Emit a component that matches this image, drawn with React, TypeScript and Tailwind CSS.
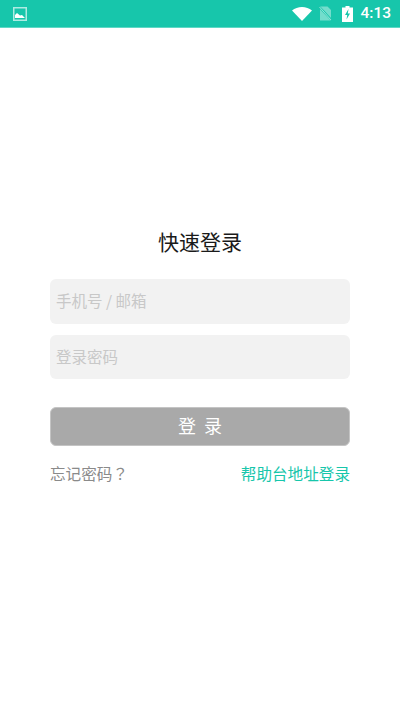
const cjk = "font-['Noto_Sans_CJK_SC',sans-serif]";

function StatusBar() {
  return (
    <div className="flex h-[28px] items-center justify-between border-b border-[#5fd8c5] bg-[#17c6ab] pl-[13px] pr-[9px]">
      <svg width="14" height="14" viewBox="0 0 14 14">
        <rect x="0.75" y="0.75" width="12.5" height="12.5" fill="none" stroke="#fff" strokeOpacity="0.65" strokeWidth="1.5" />
        <path d="M2 11V8l2-2 3 2.5 2-0.5 3 3z" fill="#fff" />
      </svg>
      <div className="flex items-center">
        <svg width="20" height="14" viewBox="0 0 20 14" className="mr-[7px]">
          <path d="M0 3.5C2.8 1.2 6.2 0 10 0s7.2 1.2 10 3.5L10 14z" fill="#fff" />
        </svg>
        <svg width="13" height="15" viewBox="0 0 13 15" className="mr-[10px]">
          <path d="M1 0.5h7.5l3.5 3.5v10.5H1z" fill="#fff" fillOpacity="0.4" />
          <path d="M0 0.5l13 14" stroke="#17c6ab" strokeWidth="2" />
          <path d="M0.5 1l11.5 13" stroke="#fff" strokeOpacity="0.55" strokeWidth="1" />
        </svg>
        <svg width="11" height="16" viewBox="0 0 11 16" className="mr-[7px]">
          <path d="M3.5 0h4v1.5H11V16H0V1.5h3.5z" fill="#fff" />
          <path d="M6.5 3L3 9h2.2L4.5 13.5 8 7.5H5.8z" fill="#17c6ab" />
        </svg>
        <span className="font-['Roboto',sans-serif] text-[15.5px] font-medium leading-none text-white">4:13</span>
      </div>
    </div>
  );
}

function Field({ placeholder, type }: { placeholder: string; type?: string }) {
  return (
    <input
      type={type ?? 'text'}
      placeholder={placeholder}
      className="h-[44.5px] w-full rounded-[6px] bg-[#f2f2f2] px-[6px] pb-[2px] text-[15.5px] outline-none placeholder:text-[#c8c8c8]"
    />
  );
}

export default function App() {
  return (
    <div className={`flex h-[711px] w-[400px] flex-col bg-white ${cjk}`}>
      <StatusBar />
      <div className="flex flex-col px-[50px] pt-[201px]">
        <h1 className="text-center text-[21px] font-normal leading-[24px] text-[#1a1a1a]">快速登录</h1>
        <div className="mt-[26px] flex flex-col gap-[11px]">
          <Field placeholder="手机号 / 邮箱" />
          <Field placeholder="登录密码" type="password" />
        </div>
        <button className="mt-[28px] h-[39px] w-full rounded-[6px] border border-[#c4c4c4] bg-[#a9a9a9] pb-[3px] text-[18px] leading-none text-white">
          登&nbsp;&nbsp;录
        </button>
        <div className="mt-[16px] flex items-center justify-between text-[15.6px] leading-[22px]">
          <span className="text-[#8a8a8a]">
            忘记密码<span className="font-['Noto_Sans_CJK_TC',sans-serif]">？</span>
          </span>
          <span className="text-[#17c6ab]">帮助台地址登录</span>
        </div>
      </div>
    </div>
  );
}
